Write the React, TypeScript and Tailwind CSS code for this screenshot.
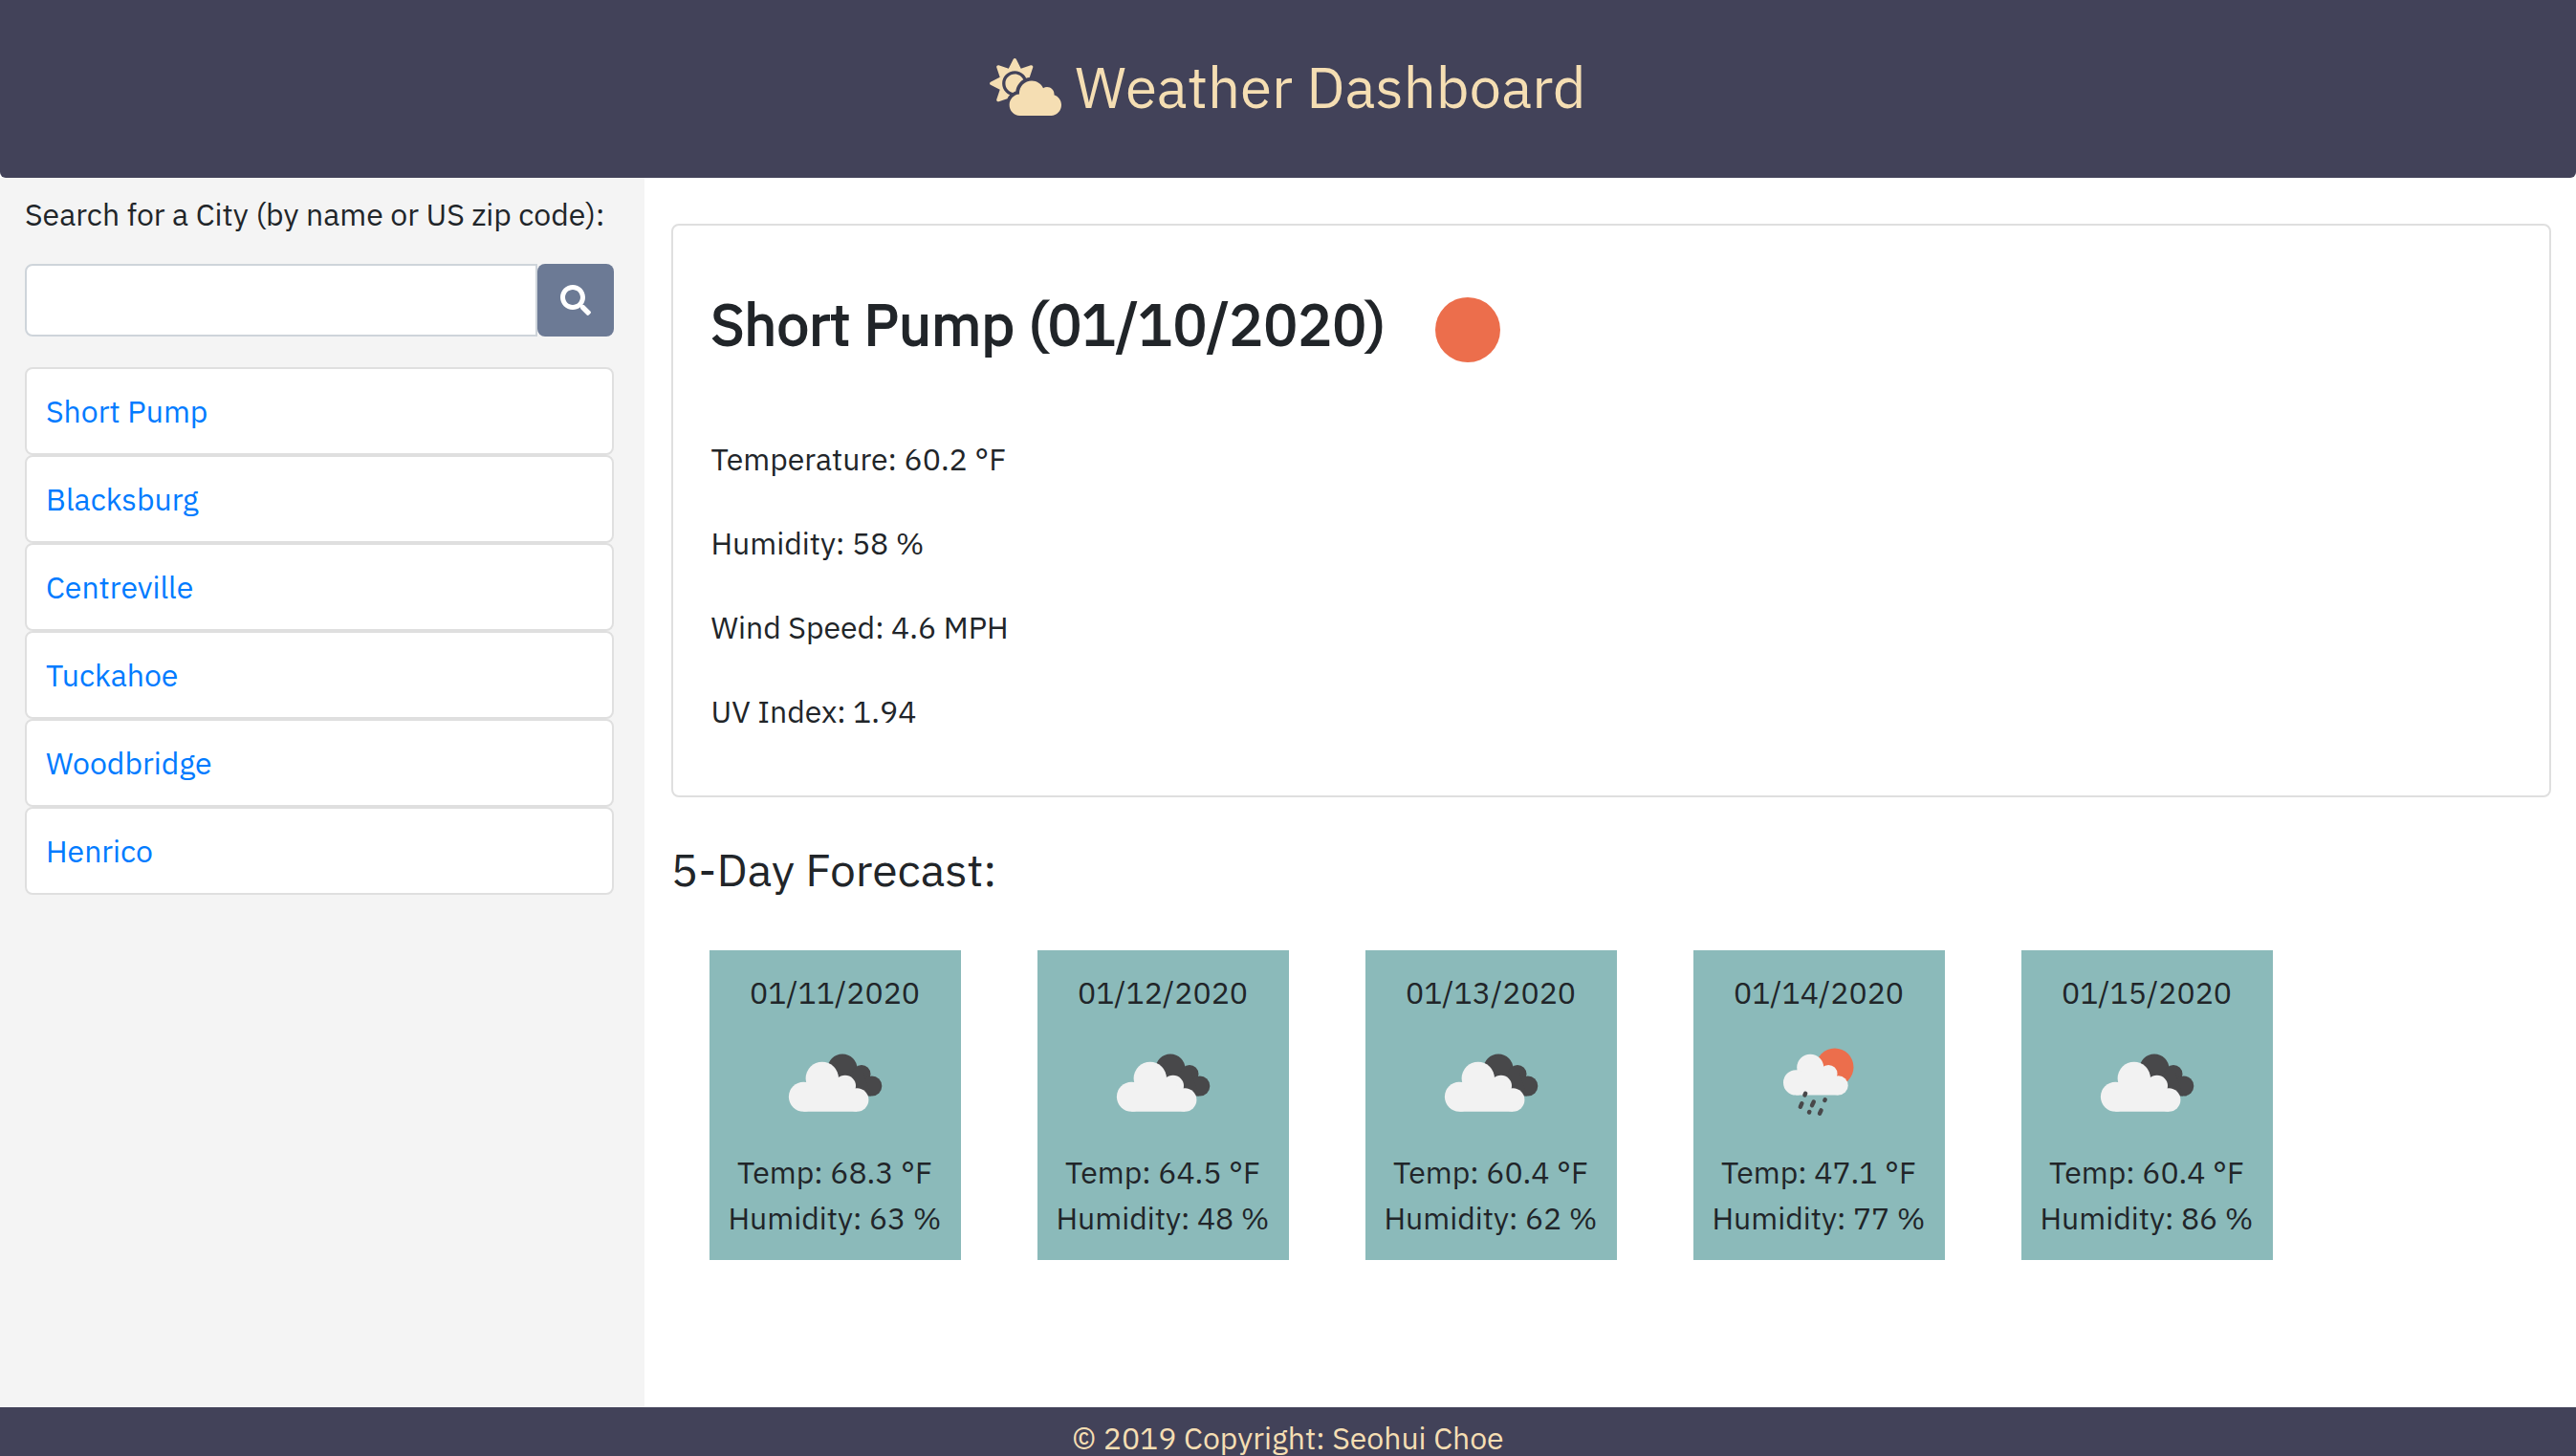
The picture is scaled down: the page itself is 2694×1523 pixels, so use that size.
import React, { useState } from "react";
import { FaCloudSun, FaSearch } from "react-icons/fa";

type Sky = "clouds" | "rain";

const cities = ["Short Pump", "Blacksburg", "Centreville", "Tuckahoe", "Woodbridge", "Henrico"];

const stats = ["Temperature: 60.2 °F", "Humidity: 58 %", "Wind Speed: 4.6 MPH", "UV Index: 1.94"];

const forecast: { date: string; sky: Sky; temp: string; humidity: string }[] = [
  { date: "01/11/2020", sky: "clouds", temp: "68.3", humidity: "63" },
  { date: "01/12/2020", sky: "clouds", temp: "64.5", humidity: "48" },
  { date: "01/13/2020", sky: "clouds", temp: "60.4", humidity: "62" },
  { date: "01/14/2020", sky: "rain", temp: "47.1", humidity: "77" },
  { date: "01/15/2020", sky: "clouds", temp: "60.4", humidity: "86" },
];

function CloudsIcon() {
  return (
    <svg viewBox="0 0 100 100" className="my-5 size-[100px]" role="img" aria-label="Broken clouds">
      <g fill="#48484a">
        <circle cx="58" cy="36" r="15.5" />
        <circle cx="78" cy="41.5" r="9.5" />
        <circle cx="88.8" cy="54" r="10.5" />
        <path d="M50 40L80 40L88 64.5H60Z" />
      </g>
      <g fill="#f2f2f2">
        <circle cx="17.4" cy="65.2" r="15.5" />
        <circle cx="36.8" cy="46" r="17.2" />
        <circle cx="60.8" cy="54" r="11.2" />
        <circle cx="73.2" cy="68.5" r="12.2" />
        <path d="M17.4 80.7V52L36 46L60 50L73.2 60V80.7Z" />
      </g>
    </svg>
  );
}

function RainIcon() {
  return (
    <svg viewBox="0 0 100 100" className="my-5 size-[100px]" role="img" aria-label="Rain">
      <circle cx="66.8" cy="34.3" r="19.7" fill="#ec6e4c" />
      <g fill="#f2f2f2">
        <circle cx="26.2" cy="50.4" r="13.2" />
        <circle cx="41.2" cy="34.7" r="14" />
        <circle cx="60.2" cy="41.2" r="9.3" />
        <circle cx="70.5" cy="53.4" r="10.2" />
        <path d="M26.2 63.6V40L41 35L60 38L70.5 46V63.6Z" />
      </g>
      <g stroke="#48484a" strokeWidth="4.4" strokeLinecap="round">
        <path d="M36.2 61.7L35.4 63.5" />
        <path d="M32.4 72.2L30.8 75.8" />
        <path d="M44.8 70.5L43 74.2" />
        <path d="M56.7 68.2L56.3 69" />
        <path d="M40.3 81L40 81.5" />
        <path d="M52.6 79.4L51 82.8" />
      </g>
    </svg>
  );
}

export default function App() {
  const [query, setQuery] = useState("");

  return (
    <div className="flex min-h-screen flex-col bg-white font-['IBM_Plex_Sans','Noto_Sans',sans-serif] text-[32px] leading-[48px] text-[#212529]">
      <header className="flex items-start justify-center gap-3.5 rounded-b-md bg-[#424259] pt-[55px] pb-[59px] text-[60px] leading-[72px] text-[#f5deb3]">
        <FaCloudSun className="mt-1.5 h-[60px] w-[75px]" aria-hidden />
        <h1>Weather Dashboard</h1>
      </header>

      <div className="flex flex-1">
        <aside className="w-1/4 shrink-0 bg-[#f4f4f4] pt-3.5 pr-8 pl-[26px]">
          <form onSubmit={(e) => e.preventDefault()}>
            <label htmlFor="city" className="block whitespace-nowrap">
              Search for a City (by name or US zip code):
            </label>
            <div className="mt-7 flex h-[76px]">
              <input
                id="city"
                type="text"
                value={query}
                onChange={(e) => setQuery(e.target.value)}
                className="min-w-0 flex-1 rounded-l-lg border-2 border-[#ced4da] bg-white px-6 outline-none"
              />
              <button
                type="submit"
                aria-label="Search"
                className="flex w-20 items-center justify-center rounded-lg bg-[#6c7a95] text-white"
              >
                <FaSearch className="size-8" aria-hidden />
              </button>
            </div>
          </form>
          <ul className="mt-8">
            {cities.map((city) => (
              <li key={city} className="rounded-lg border-2 border-[#dfdfdf] bg-white p-5">
                <a href="#" className="text-[#007bff]">
                  {city}
                </a>
              </li>
            ))}
          </ul>
        </aside>

        <main className="min-w-0 flex-1 pt-12 pr-[26px] pl-7">
          <section className="rounded-lg border-2 border-[#dfdfdf] px-10 pt-[67px] pb-16">
            <div className="flex items-start gap-[52px]">
              <h2 className="text-[60px] leading-[72px] [-webkit-text-stroke:2px_#212529]">
                Short Pump (01/10/2020)
              </h2>
              <svg viewBox="0 0 68 68" className="mt-2 size-[68px]" role="img" aria-label="Clear sky">
                <circle cx="34" cy="34" r="34" fill="#ec6e4c" />
              </svg>
            </div>
            <div className="mt-[77px] flex flex-col gap-10">
              {stats.map((line) => (
                <p key={line}>{line}</p>
              ))}
            </div>
          </section>

          <h3 className="mt-[46px] text-[48px] leading-[58px]">5-Day Forecast:</h3>
          <div className="mt-14 flex flex-wrap gap-20 pl-10">
            {forecast.map((day) => (
              <article
                key={day.date}
                className="flex w-[263px] flex-col items-center bg-[#8bbaba] py-5 whitespace-nowrap"
              >
                <p>{day.date}</p>
                {day.sky === "clouds" ? <CloudsIcon /> : <RainIcon />}
                <p>Temp: {day.temp} °F</p>
                <p>Humidity: {day.humidity} %</p>
              </article>
            ))}
          </div>
        </main>
      </div>

      <footer className="bg-[#424259] pt-3.5 text-center leading-[37px] text-[#f5deb3]">
        © 2019 Copyright: Seohui Choe
      </footer>
    </div>
  );
}
